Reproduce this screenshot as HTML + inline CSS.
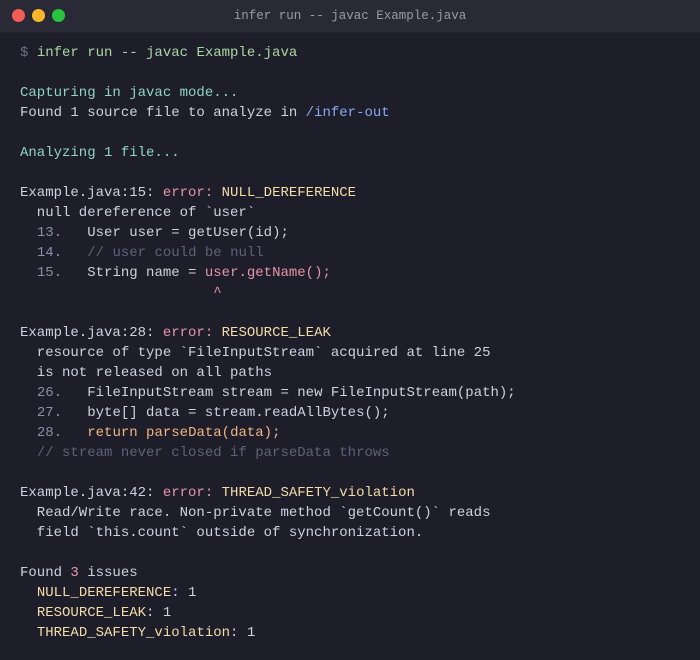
<!DOCTYPE html>
<html><head><meta charset="utf-8"><style>
html,body{margin:0;padding:0;width:700px;height:660px;background:#1e1e2b;overflow:hidden}
.bar{height:32px;background:#2a2a37;position:relative;border-bottom:1px solid #232330}
.dot{position:absolute;top:9px;width:13px;height:13px;border-radius:50%}
.t{position:absolute;left:0;right:0;top:0;font:12.5px/32px "Liberation Mono",monospace;text-align:center;color:#9a9aa8}
pre{margin:0;padding:10px 20px 0;font:14px/20px "Liberation Mono",monospace;color:#cdd2e0}
.g{color:#a8d8a0}.p{color:#6c7086}.c{color:#8fd3c8}.b{color:#89a8f0}.r{color:#e495a9}.y{color:#f3dca6}.m{color:#5e6278}.k{color:#8a8fa5}.o{color:#f2b482}.n{color:#b5bdd6}
</style></head><body>
<div class="bar"><div class="dot" style="left:12px;background:#f25b56"></div><div class="dot" style="left:32px;background:#f9b62b"></div><div class="dot" style="left:52px;background:#27c43f"></div><div class="t">infer run -- javac Example.java</div></div>
<pre><span class="p">$</span> <span class="g">infer run -- javac Example.java</span>

<span class="c">Capturing in javac mode...</span>
Found 1 source file to analyze in <span class="b">/infer-out</span>

<span class="c">Analyzing 1 file...</span>

Example.java:15: <span class="r">error:</span> <span class="y">NULL_DEREFERENCE</span>
  null dereference of `user`
  <span class="k">13.</span>   User user = getUser(id);
  <span class="k">14.</span>   <span class="m">// user could be null</span>
  <span class="k">15.</span>   String name = <span class="r">user.getName();</span>
                       <span class="r">^</span>

Example.java:28: <span class="r">error:</span> <span class="y">RESOURCE_LEAK</span>
  resource of type `FileInputStream` acquired at line 25
  is not released on all paths
  <span class="k">26.</span>   FileInputStream stream = new FileInputStream(path);
  <span class="k">27.</span>   byte[] data = stream.readAllBytes();
  <span class="k">28.</span>   <span class="o">return parseData(data);</span>
  <span class="m">// stream never closed if parseData throws</span>

Example.java:42: <span class="r">error:</span> <span class="y">THREAD_SAFETY_violation</span>
  Read/Write race. Non-private method `getCount()` reads
  field `this.count` outside of synchronization.

Found <span class="r">3</span> issues
  <span class="y">NULL_DEREFERENCE</span>: 1
  <span class="y">RESOURCE_LEAK</span>: 1
  <span class="y">THREAD_SAFETY_violation</span>: 1
</pre>
</body></html>
